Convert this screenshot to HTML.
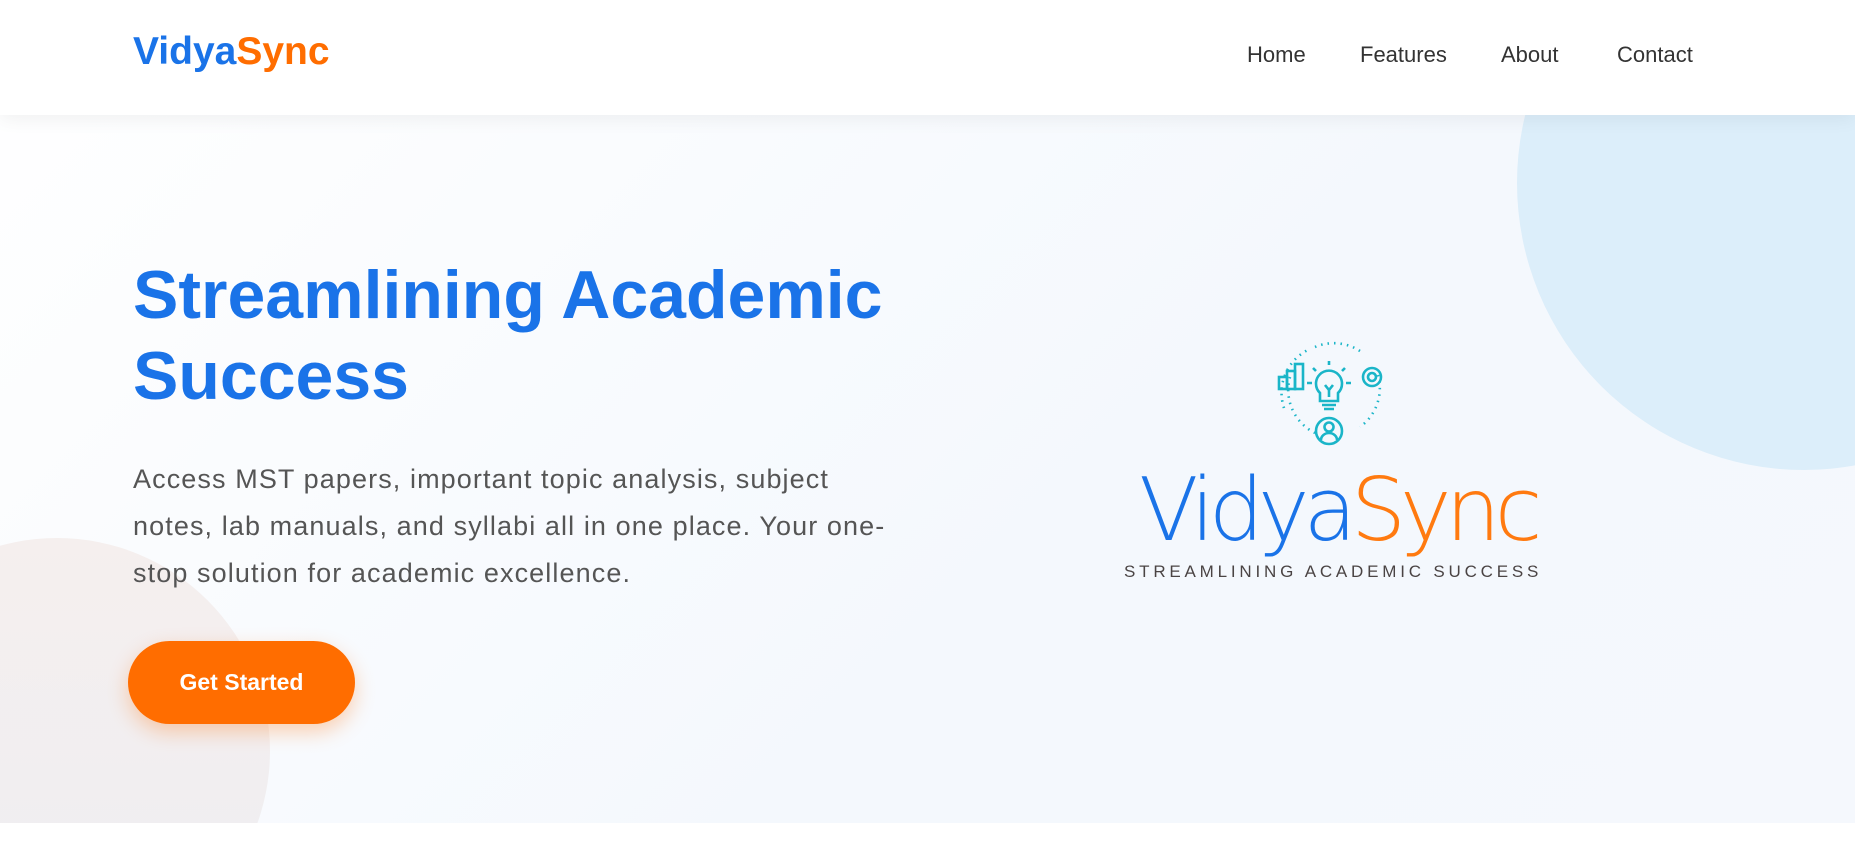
<!DOCTYPE html>
<html><head><meta charset="utf-8"><style>
*{margin:0;padding:0;box-sizing:border-box}
html,body{width:1855px;height:846px;overflow:hidden}
body{background:#fff;font-family:"Liberation Sans",sans-serif;position:relative}
.hero{position:absolute;left:0;top:0;width:1855px;height:823px;background:linear-gradient(135deg,#ffffff 0%,#f4f8fd 60%,#f5f8fd 100%);overflow:hidden}
.c1{position:absolute;left:1517px;top:-104px;width:574px;height:574px;border-radius:50%;background:#dceefa}
.c2{position:absolute;left:-156px;top:538px;width:426px;height:426px;border-radius:50%;background:linear-gradient(180deg,#f5efee,#eeeef2)}
header{position:absolute;left:0;top:0;width:1855px;height:115px;background:#fff;box-shadow:0 4px 18px rgba(0,0,0,.06);z-index:2}
.logo{position:absolute;left:133px;top:30px;font-size:39px;font-weight:bold;color:#1a73e8}
.logo span{color:#ff6d00}
nav a{position:absolute;top:42px;font-size:22px;color:#333;text-decoration:none}
h1{position:absolute;left:133px;top:255px;font-size:68px;line-height:81px;color:#1a73e8;font-weight:bold;z-index:1;white-space:nowrap}
p{position:absolute;left:133px;top:456px;font-size:27px;letter-spacing:1.1px;line-height:47px;color:#555;z-index:1;white-space:nowrap}
.btn{position:absolute;left:128px;top:641px;width:227px;height:83px;border-radius:42px;background:#ff6d00;color:#fff;font-weight:bold;font-size:23px;text-align:center;line-height:83px;box-shadow:0 8px 20px rgba(255,109,0,.3);z-index:1}
.big{position:absolute;left:1139px;top:460px;font-size:87px;line-height:100px;color:#1a73e8;letter-spacing:-6px;font-family:"DejaVu Sans","Liberation Sans",sans-serif;font-weight:200;white-space:nowrap}
.big span{color:#ff7a10}
.tag{position:absolute;left:1124px;top:562px;font-size:17px;letter-spacing:3.8px;color:#4a4444;white-space:nowrap}
</style></head><body>
<div class="hero"><div class="c1"></div><div class="c2"></div></div>
<header><div class="logo">Vidya<span>Sync</span></div>
<nav><a style="left:1247px">Home</a><a style="left:1360px">Features</a><a style="left:1501px">About</a><a style="left:1617px">Contact</a></nav></header>
<h1>Streamlining Academic<br>Success</h1>
<p>Access MST papers, important topic analysis, subject<br>notes, lab manuals, and syllabi all in one place. Your one-<br>stop solution for academic excellence.</p>
<div class="btn">Get Started</div>
<svg style="position:absolute;left:1270px;top:335px" width="130" height="112" viewBox="0 0 130 112" fill="none" stroke="#1ab5c8" stroke-width="2.6">
<path d="M14 73 A48 48 0 0 1 40 14" stroke-dasharray="1.5 5"/>
<path d="M45 12 A48 48 0 0 1 90 16" stroke-dasharray="1.5 5"/>
<path d="M108 40 A48 48 0 0 1 90 92" stroke-dasharray="1.5 5"/>
<path d="M20 42 A48 48 0 0 0 45 98" stroke-dasharray="1.5 5"/>
<rect x="9" y="42" width="8" height="12"/><rect x="17" y="36" width="8" height="18"/><rect x="25" y="29" width="8" height="25"/>
<circle cx="102" cy="42" r="9"/><circle cx="102" cy="42" r="4"/>
<path d="M50 58 a13 13 0 1 1 18 0 v8 h-18z M52 70 h14 M54 74 h10 M55 50 l4 5 l4 -5 M59 55 v7"/>
<path d="M42 48 h-5 M76 48 h5 M46 36 l-3 -3 M72 36 l3 -3 M59 30 v-4"/>
<circle cx="59" cy="96" r="13"/><circle cx="59" cy="92" r="4.5"/><path d="M51 105 a8 7 0 0 1 16 0"/>
</svg>
<div class="big">Vidya<span>Sync</span></div>
<div class="tag">STREAMLINING ACADEMIC SUCCESS</div>
</body></html>
